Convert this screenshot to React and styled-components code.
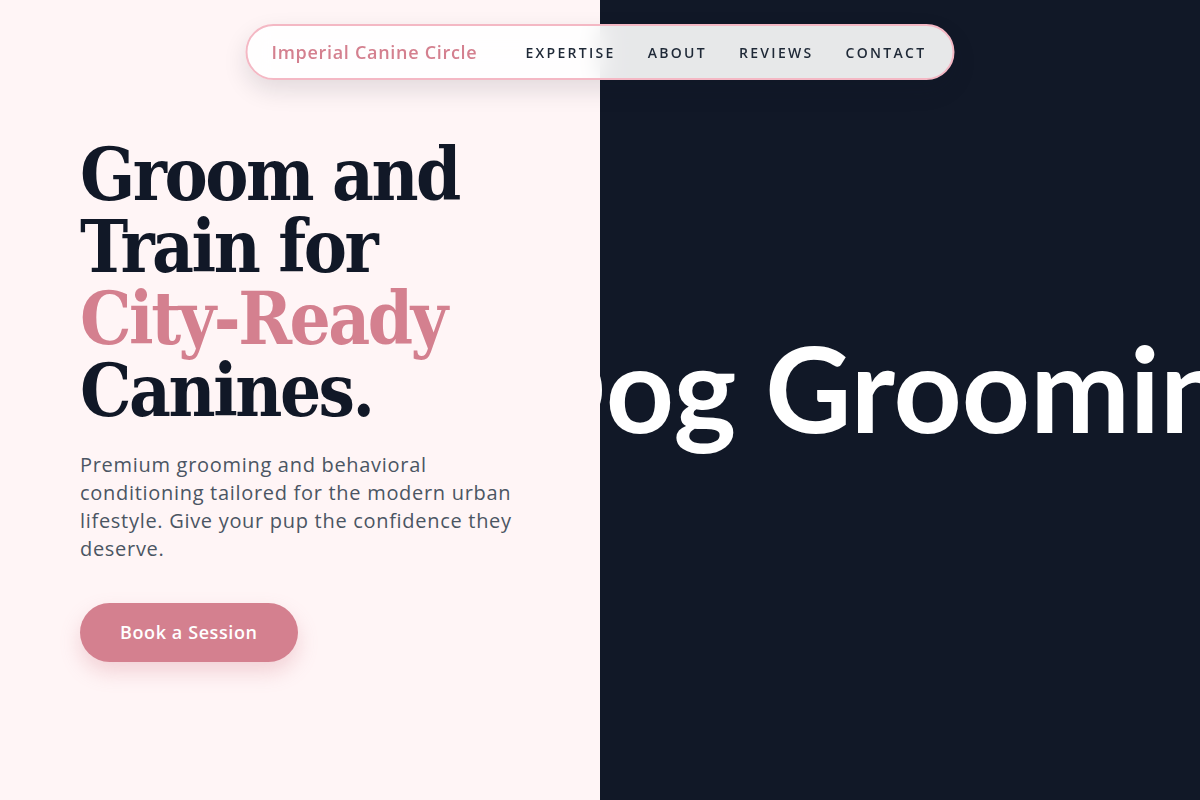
import React from "react";
import styled, { createGlobalStyle } from "styled-components";

const GlobalStyle = createGlobalStyle`
  * { box-sizing: border-box; }
  html, body { margin: 0; padding: 0; }
  body {
    font-family: "Open Sans", "Noto Sans", sans-serif;
    background: #fff5f6;
    overflow: hidden;
  }
`;

const Page = styled.main`
  position: relative;
  display: grid;
  grid-template-columns: 1fr 1fr;
  width: 100%;
  height: 100vh;
`;

const Nav = styled.nav`
  position: absolute;
  top: 24px;
  left: 50%;
  transform: translateX(-50%);
  z-index: 10;
  display: flex;
  align-items: center;
  gap: 48px;
  height: 56px;
  padding: 0 26px 0 24px;
  border: 2px solid #f4b8c4;
  border-radius: 999px;
  background: rgba(255, 255, 255, 0.9);
  backdrop-filter: blur(12px);
  box-shadow: 0 10px 25px rgba(17, 24, 39, 0.12);
`;

const Logo = styled.a`
  font-size: 18px;
  font-weight: 600;
  letter-spacing: 0.7px;
  color: #d4808f;
  text-decoration: none;
  white-space: nowrap;
`;

const Links = styled.ul`
  display: flex;
  gap: 32px;
  margin: 0;
  padding: 0;
  list-style: none;
`;

const NavLink = styled.a`
  font-size: 14px;
  font-weight: 600;
  letter-spacing: 2.3px;
  text-transform: uppercase;
  color: #1f2937;
  text-decoration: none;
`;

const Hero = styled.section`
  display: flex;
  flex-direction: column;
  justify-content: center;
  padding: 0 60px 0 80px;
`;

const Title = styled.h1`
  margin: 0;
  font-family: "DejaVu Serif Condensed", "DejaVu Serif", serif;
  font-size: 72px;
  font-weight: 700;
  line-height: 72px;
  letter-spacing: -2.5px;
  color: #111827;
`;

const Accent = styled.span`
  color: #d4808f;
`;

const Lead = styled.p`
  margin: 24px 0 0;
  max-width: 450px;
  font-size: 20px;
  line-height: 28px;
  letter-spacing: 0.7px;
  color: #4b5563;
`;

const CTA = styled.button`
  align-self: flex-start;
  margin-top: 40px;
  height: 59px;
  padding: 0 40px;
  border: none;
  border-radius: 999px;
  background: #d4808f;
  color: #fff;
  font-family: inherit;
  font-size: 18px;
  font-weight: 600;
  letter-spacing: 0.6px;
  box-shadow: 0 10px 20px rgba(212, 128, 143, 0.3);
  cursor: pointer;
`;

const Visual = styled.section`
  display: flex;
  align-items: center;
  justify-content: center;
  overflow: hidden;
  background: #111827;
`;

const VisualText = styled.div`
  flex-shrink: 0;
  margin: 0 0 26px 6px;
  font-family: Lato, sans-serif;
  font-size: 119px;
  font-weight: 700;
  color: #fff;
  white-space: nowrap;
`;

const links = ["Expertise", "About", "Reviews", "Contact"];

export default function App() {
  return (
    <>
      <GlobalStyle />
      <Page>
        <Nav>
          <Logo href="#">Imperial Canine Circle</Logo>
          <Links>
            {links.map((l) => (
              <li key={l}>
                <NavLink href="#">{l}</NavLink>
              </li>
            ))}
          </Links>
        </Nav>
        <Hero>
          <Title>
            Groom and
            <br />
            Train for
            <br />
            <Accent>City-Ready</Accent>
            <br />
            Canines.
          </Title>
          <Lead>
            Premium grooming and behavioral conditioning tailored for the
            modern urban lifestyle. Give your pup the confidence they deserve.
          </Lead>
          <CTA>Book a Session</CTA>
        </Hero>
        <Visual>
          <VisualText>Dog Grooming</VisualText>
        </Visual>
      </Page>
    </>
  );
}
